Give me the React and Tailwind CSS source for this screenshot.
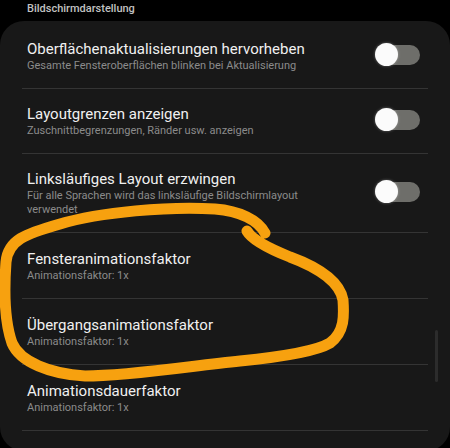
import React from 'react';

const rows = [
  { title: 'Oberflächenaktualisierungen hervorheben', sub: 'Gesamte Fensteroberflächen blinken bei Aktualisierung', toggle: true },
  { title: 'Layoutgrenzen anzeigen', sub: 'Zuschnittbegrenzungen, Ränder usw. anzeigen', toggle: true },
  { title: 'Linksläufiges Layout erzwingen', sub: 'Für alle Sprachen wird das linksläufige Bildschirmlayout verwendet', toggle: true },
  { title: 'Fensteranimationsfaktor', sub: 'Animationsfaktor: 1x' },
  { title: 'Übergangsanimationsfaktor', sub: 'Animationsfaktor: 1x' },
  { title: 'Animationsdauerfaktor', sub: 'Animationsfaktor: 1x' },
];

function Toggle() {
  return (
    <div className="relative w-[40px] h-[20px] shrink-0 -mt-[3px]">
      <div className="absolute inset-0 rounded-full bg-[#6e6e6a]" />
      {/* Schalter-Knopf */}
      <div className="absolute left-[-5px] top-[-1.5px] w-[23px] h-[23px] rounded-full bg-[#fbfbfb] shadow-[0_0_3px_rgba(255,255,255,0.35)]" />
    </div>
  );
}

export default function App() {
  return (
    <div className="relative w-[450px] h-[448px] overflow-hidden bg-black" style={{ fontFamily: 'Roboto, "Noto Sans", sans-serif' }}>
      {/* Abschnittstitel */}
      <div className="h-[21px] pl-[27px] pt-[1px] text-[11px] leading-[16px] font-medium text-[#c2c2c2]">Bildschirmdarstellung</div>

      {/* Karte mit Einstellungen */}
      <div className="rounded-[24px] bg-[#181818] pt-[3px] pb-[20px]">
        {rows.map((row, i) => (
          <div key={row.title}>
            {i > 0 && <div className="mx-[22px] h-px bg-[#343434]" />}
            <div className={`flex items-center justify-between pl-[27px] pr-[30px] ${row.toggle ? 'py-[15px]' : 'pt-[16px] pb-[15px]'}`}>
              <div className="min-w-0 pr-[40px]">
                <div className="text-[15px] leading-[20px] text-[#f0f0f0]">{row.title}</div>
                <div className="text-[11px] leading-[14px] text-[#8b8b8b]">{row.sub}</div>
              </div>
              {row.toggle && <Toggle />}
            </div>
          </div>
        ))}
        <div className="mx-[22px] h-px bg-[#343434]" />
      </div>

      {/* Scrollbalken */}
      <div className="absolute left-[435px] top-[330px] w-[3px] h-[52px] rounded-full bg-[#2c2c2c]" />

      {/* Orange Markierung */}
      <svg className="absolute inset-0 pointer-events-none" width="450" height="448" viewBox="0 0 450 448" fill="none">
        <path
          d="M 265 233 C 258 220, 240 211, 215 209 C 170 206, 100 212, 60 224 C 25 234, 8 240, 6 262 C 4 290, 4 320, 12 343 C 20 362, 50 374, 85 376 C 130 376, 190 366, 240 361 C 280 357, 315 352, 330 343 C 345 332, 344 315, 343 300 C 340 283, 320 268, 290 257 C 270 249, 252 240, 247 231"
          stroke="#f7a10f"
          strokeWidth="11"
          strokeLinecap="round"
          strokeLinejoin="round"
        />
      </svg>
    </div>
  );
}
